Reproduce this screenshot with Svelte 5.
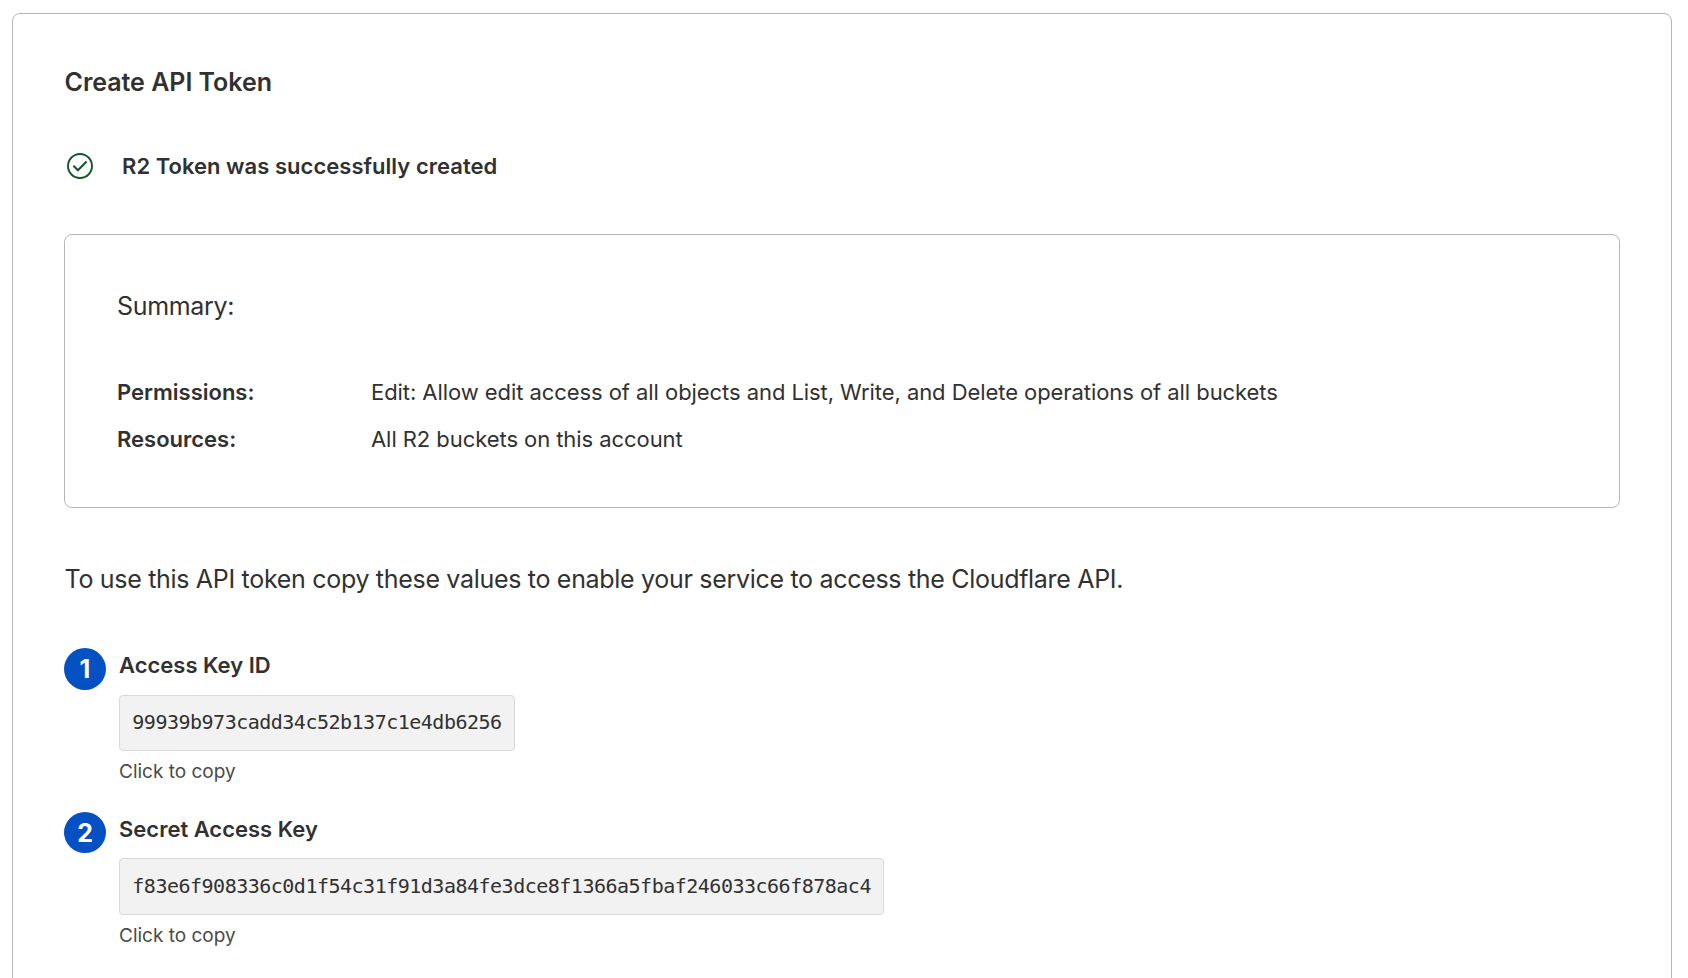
<script>
  const details = [
    { label: 'Permissions:', value: 'Edit: Allow edit access of all objects and List, Write, and Delete operations of all buckets' },
    { label: 'Resources:', value: 'All R2 buckets on this account' }
  ];
  const keys = [
    { title: 'Access Key ID', value: '99939b973cadd34c52b137c1e4db6256' },
    { title: 'Secret Access Key', value: 'f83e6f908336c0d1f54c31f91d3a84fe3dce8f1366a5fbaf246033c66f878ac4' }
  ];
</script>

<main class="card">
  <h1>Create API Token</h1>
  <div class="status">
    <svg width="26" height="26" viewBox="0 0 26 26" fill="none" stroke="#14562c" aria-hidden="true">
      <circle cx="13" cy="13" r="12" stroke-width="1.9" />
      <path d="M6.4 12.8l4.5 4.4 8.7-8.6" stroke-width="2.1" />
    </svg>
    <strong>R2 Token was successfully created</strong>
  </div>
  <section class="summary">
    <h2>Summary:</h2>
    <dl>
      {#each details as d}
        <div class="row"><dt>{d.label}</dt><dd>{d.value}</dd></div>
      {/each}
    </dl>
  </section>
  <p class="intro">To use this API token copy these values to enable your service to access the Cloudflare API.</p>
  <ol>
    {#each keys as k, i}
      <li>
        <span class="num">{i + 1}</span>
        <div class="field">
          <h3>{k.title}</h3>
          <code>{k.value}</code>
          <small>Click to copy</small>
        </div>
      </li>
    {/each}
  </ol>
</main>

<style>
  :global(body) { margin: 0; background: #fff; overflow: hidden; }
  * { box-sizing: border-box; margin: 0; padding: 0; }
  .card { margin: 13px 16px 0 12px; height: 1000px; padding: 48px 51px; border: 1px solid #b6b6b6; border-radius: 8px; color: #313131; font: 22px/34px Inter, sans-serif; }
  h1 { padding-left: 0.5px; font-size: 25px; font-weight: 600; line-height: 40px; letter-spacing: -0.03px; }
  .status { display: flex; align-items: center; height: 40px; margin-top: 44px; padding-left: 3px; gap: 29px; }
  strong { font-weight: 600; letter-spacing: 0.03px; }
  .summary { height: 274px; margin-top: 48px; padding: 51px 52px; border: 1px solid #b6b6b6; border-radius: 8px; }
  h2 { font-size: 25px; font-weight: 400; line-height: 40px; letter-spacing: -0.32px; }
  dl { margin-top: 43px; }
  .row { display: grid; grid-template-columns: 254px 1fr; line-height: 47px; }
  dt { font-weight: 600; }
  dd { letter-spacing: -0.065px; }
  .intro { margin-top: 51px; padding-left: 0.5px; font-size: 25px; line-height: 40px; letter-spacing: -0.306px; }
  ol { display: flex; flex-direction: column; gap: 25px; margin-top: 49px; list-style: none; }
  li { display: flex; gap: 13px; }
  .num { width: 42px; height: 42px; border-radius: 50%; background: #0551c3; color: #fff; font-size: 25px; font-weight: 700; line-height: 42px; text-align: center; }
  .field { display: flex; flex-direction: column; align-items: flex-start; }
  h3 { font-size: 22px; font-weight: 600; line-height: 34px; }
  code { height: 56px; margin-top: 13px; padding: 0 12.3px; border: 1px solid #d9d9d9; border-radius: 4px; background: #f2f2f2; font: 20px/52px "DejaVu Sans Mono", monospace; letter-spacing: -0.5px; }
  small { margin-top: 6px; color: #4a4a4a; font-size: 19px; line-height: 30px; }
  li + li .num { height: 41px; }
  li + li code { height: 57px; margin-top: 12px; padding-bottom: 1px; line-height: 54px; }
</style>
